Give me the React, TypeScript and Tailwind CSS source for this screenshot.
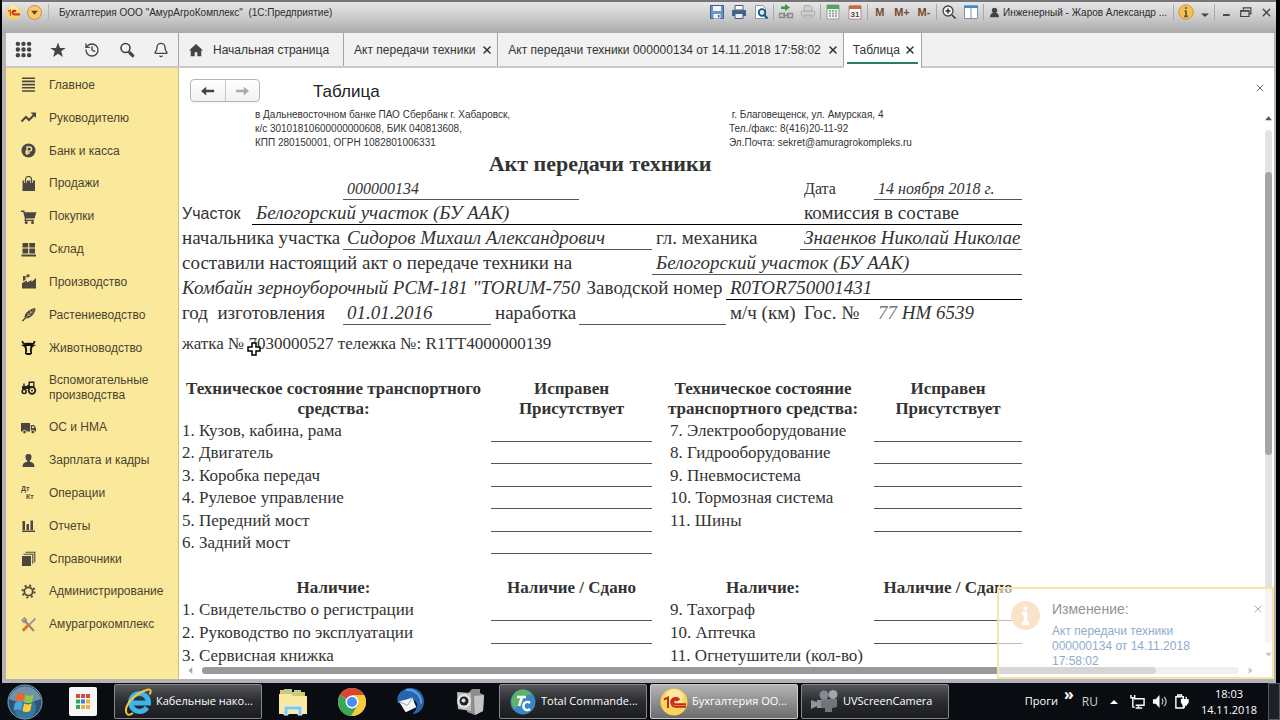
import type { ReactNode } from "react";
import { Bell, History, X } from "lucide-react";

const ink = "#4b4640";

const navItems: { label: string; icon: ReactNode }[] = [
  {
    label: "Главное",
    icon: <path d="M1 1.200h13M1 4.400h13M1 7.600h13M1 10.800h13M1 14h13" stroke={ink} strokeWidth="1.600" fill="none" />,
  },
  {
    label: "Руководителю",
    icon: (
      <g>
        <path d="M.5 11.500l4.500-4.500 3 3 5-5" stroke={ink} strokeWidth="2" fill="none" />
        <path d="M9.500 2.500H15V8z" fill={ink} />
      </g>
    ),
  },
  {
    label: "Банк и касса",
    icon: (
      <g>
        <circle cx="7.500" cy="7.500" r="7" fill={ink} />
        <path d="M6 12V4h2.500a2 2 0 0 1 0 4.200H4.300M4.300 10h4.500" stroke="#fbe99b" strokeWidth="1.300" fill="none" />
      </g>
    ),
  },
  {
    label: "Продажи",
    icon: (
      <g>
        <path d="M1.500 4.500h12.500V15H1.500z" fill={ink} />
        <path d="M4.500 7V3.500a3 3 0 0 1 6 0V7" stroke="#fbe99b" strokeWidth="2.600" fill="none" />
        <path d="M4.500 7V3.500a3 3 0 0 1 6 0V7" stroke={ink} strokeWidth="1.200" fill="none" />
      </g>
    ),
  },
  {
    label: "Покупки",
    icon: (
      <g fill={ink}>
        <path d="M0 1.500h3.200l.7 1.700H15.500L13.500 9.500H5.200l-.2 1.200h8v1.300H3.500l.4-2.500L2.200 3H0z" />
        <circle cx="5.200" cy="13.500" r="1.500" />
        <circle cx="11.500" cy="13.500" r="1.500" />
      </g>
    ),
  },
  {
    label: "Склад",
    icon: <path d="M1.500 1h5.700v4.500H1.500zM8.300 1H14v4.500H8.300zM1.500 6.500h5.700V11.500H1.500zM8.300 6.500H14v5H8.300zM.5 12.500H15V14.500H.5z" fill={ink} />,
  },
  {
    label: "Производство",
    icon: <path d="M1 14.500V9L6 6.500v2L10.500 6v2L15 4v10.500zM2 2h2.500v4L2 7zM5.500.5h3v2.500H7L5.500 4z" fill={ink} />,
  },
  {
    label: "Растениеводство",
    icon: (
      <g>
        <path d="M3.500 11C3 6.500 8 2 14.500 1 14.500 6 10 11.500 5 11.500L1.800 14.500.8 13.500z" fill={ink} />
        <path d="M4 11.500L13 2.500M7 6v2.500h3M9.500 3.500V6H12" stroke="#fbe99b" strokeWidth=".5" fill="none" />
      </g>
    ),
  },
  {
    label: "Животноводство",
    icon: (
      <g>
        <path d="M1.500 1c-.3 3 2 3 4 2.700h4c2 .3 4.300.3 4-2.700" stroke="#111" strokeWidth="1.700" fill="none" />
        <path d="M0 5l4.500-1h6L15 5l-3.500 2-.8 3.500.5 3-2 1.500H5.800l-2-1.500.5-3L3.500 7z" fill="#111" />
        <path d="M5.500 6h4l-.7 5 .7 2h-4l.7-2z" fill="#fbe99b" />
      </g>
    ),
  },
  {
    label: "Вспомогательные производства",
    icon: (
      <g>
        <path d="M1 6h5V5h1.500V1.500h6V9H1z" fill="#222" />
        <path d="M9 3h3.200v3H9z" fill="#fbe99b" />
        <path d="M3 3.500V6" stroke="#222" strokeWidth="1.400" />
        <circle cx="11" cy="10.500" r="3.300" fill="#fbe99b" stroke="#222" strokeWidth="1.800" />
        <circle cx="11" cy="10.500" r="1" fill="#222" />
        <circle cx="3.200" cy="11.500" r="2" fill="#fbe99b" stroke="#222" strokeWidth="1.600" />
      </g>
    ),
  },
  {
    label: "ОС и НМА",
    icon: (
      <g>
        <path d="M0 3h9v8.500H0zM9.800 5h3.200L15 8v3.500H9.800z" fill={ink} />
        <path d="M11 6.200h1.600l1 1.800H11z" fill="#fbe99b" />
        <circle cx="3.500" cy="12" r="1.800" fill={ink} stroke="#fbe99b" strokeWidth=".8" />
        <circle cx="11.800" cy="12" r="1.800" fill={ink} stroke="#fbe99b" strokeWidth=".8" />
      </g>
    ),
  },
  {
    label: "Зарплата и кадры",
    icon: <path d="M7.500 1a3 3 0 0 1 3 3.300c-.1 1.700-1 3.200-1.700 3.500v1c3 .5 4.500 1.500 4.700 5.200h-12c.2-3.700 1.700-4.700 4.700-5.200v-1C5.500 7.500 4.600 6 4.500 4.300A3 3 0 0 1 7.500 1z" fill={ink} />,
  },
  {
    label: "Операции",
    icon: (
      <g fill={ink} fontSize="7" fontWeight="700" fontFamily="Liberation Sans, sans-serif">
        <text x="0" y="6">Дт</text>
        <text x="5" y="14">Кт</text>
      </g>
    ),
  },
  {
    label: "Отчеты",
    icon: <path d="M1.500 3h2.500v9H1.500zM5.500 6H8v6H5.500zM9.500 2.500H12V12H9.500zM1 12.500h13V14H1z" fill={ink} />,
  },
  {
    label: "Справочники",
    icon: (
      <g>
        <path d="M1 5h9v10H1z" fill={ink} />
        <path d="M2.500 3.200h9.300v9.500M4.500 1.200h9.300v10" stroke={ink} strokeWidth="1.100" fill="none" />
      </g>
    ),
  },
  {
    label: "Администрирование",
    icon: (
      <g fill="none" stroke={ink}>
        <circle cx="7.500" cy="7.500" r="4.200" strokeWidth="1.800" />
        <circle cx="7.500" cy="7.500" r="6" strokeWidth="2" strokeDasharray="2 2.710" />
      </g>
    ),
  },
  {
    label: "Амурагрокомплекс",
    icon: (
      <g fill="none">
        <path d="M3 3l10 11" stroke="#8b8b86" strokeWidth="2" />
        <path d="M1 3.500L3.500 1l2 2L3 5.500z" stroke="#8b8b86" strokeWidth="1.300" />
        <path d="M14.500 1.500L8 8" stroke="#999" strokeWidth="1.800" />
        <path d="M8 7.500L1.800 13.800" stroke="#e2762a" strokeWidth="3" />
      </g>
    ),
  },
];

const tabs = ["Акт передачи техники", "Акт передачи техники 000000134 от 14.11.2018 17:58:02"];

const condition = [
  ["1. Кузов, кабина, рама", "7. Электрооборудование"],
  ["2. Двигатель", "8. Гидрооборудование"],
  ["3. Коробка передач", "9. Пневмосистема"],
  ["4. Рулевое управление", "10. Тормозная система"],
  ["5. Передний мост", "11. Шины"],
  ["6. Задний мост", ""],
];

const presence = [
  ["1. Свидетельство о регистрации", "9. Тахограф"],
  ["2. Руководство по эксплуатации", "10. Аптечка"],
  ["3. Сервисная книжка", "11. Огнетушители (кол-во)"],
];

const Sep = () => <span className="mx-px h-4 w-px shrink-0 bg-[#a9a9a9]" />;

const Tool = ({ label, children }: { label: string; children: ReactNode }) => (
  <button aria-label={label} className="flex h-5 w-[22px] shrink-0 items-center justify-center text-[11px] font-bold text-[#7a4a2c]">
    {children}
  </button>
);

const Svg = ({ children, size = 16 }: { children: ReactNode; size?: number }) => (
  <svg width={size} height={size} viewBox="0 0 16 16" className="shrink-0">
    {children}
  </svg>
);

const OneC = ({ size }: { size: number }) => (
  <svg width={size} height={size} viewBox="0 0 28 28" className="shrink-0">
    <circle cx="14" cy="14" r="13.500" fill="#fcd45c" />
    <circle cx="14" cy="10" r="9" fill="#fff3b8" opacity=".7" />
    <path d="M4 11.500l4-2V20M19.500 12a4.500 4.500 0 1 0-4 6.800H26M17.500 13.200a2.200 2.200 0 1 0-2 3H26" stroke="#c8281c" strokeWidth="2" fill="none" />
  </svg>
);

const TitleBar = () => (
  <header className="flex h-[33px] shrink-0 items-start border-t-2 border-[#77757a] bg-linear-to-b from-[#e6e6e6] via-[#cbcbcb] to-[#a9a9aa] pl-1 text-[10px] text-[#2b2b2b]">
    <div className="flex h-5 min-w-0 flex-1 items-center">
      <OneC size={15} />
      <button aria-label="Меню" className="ml-[6px] flex size-[15px] items-center justify-center rounded-full border border-[#c98f3a] bg-[#f8c873]">
        <Svg size={9}>
          <path d="M2 5h12l-6 7z" fill="#6b3d10" />
        </Svg>
      </button>
      <span className="ml-[6px] h-4 w-px bg-[#b5b5b5]" />
      <h1 className="ml-[10px] truncate whitespace-pre">Бухгалтерия ООО "АмурАгроКомплекс"  (1С:Предприятие)</h1>
    </div>
    <div className="flex h-5 items-center">
      <Tool label="Сохранить">
        <Svg>
          <path d="M1.500 1.500h13v13h-13z" fill="#6f93c4" stroke="#3d5f93" />
          <path d="M4 2h8v5H4zM4.500 10h7v4.500h-7z" fill="#eef3fa" />
          <path d="M9 11h1.500v2.500H9z" fill="#3d5f93" />
        </Svg>
      </Tool>
      <Tool label="Печать">
        <Svg>
          <path d="M4 1.500h8V6H4z" fill="#fff" stroke="#3f5c80" />
          <path d="M1 6h14v6H1z" fill="#456388" />
          <path d="M4 9.500h8v5H4z" fill="#e8eef5" stroke="#3f5c80" />
        </Svg>
      </Tool>
      <Tool label="Просмотр">
        <Svg>
          <path d="M2.500 1.500h7l3 3v10h-10z" fill="#fff" stroke="#8a99aa" />
          <circle cx="9" cy="8.500" r="3.300" fill="#cfe6f7" stroke="#14527a" strokeWidth="1.700" />
          <path d="M11 11l3.500 3.500" stroke="#14527a" strokeWidth="2" />
        </Svg>
      </Tool>
      <Sep />
      <Tool label="Ссылка">
        <Svg>
          <path d="M7 0l5 3.500L7 7V5H3V2.500h4z" fill="#3f9a44" />
          <path d="M1.500 9.500h5v4h-5zM9.500 9.500h5v4h-5zM5 11.500h6" fill="none" stroke="#888" strokeWidth="1.300" />
        </Svg>
      </Tool>
      <Tool label="Печать ссылки">
        <Svg>
          <path d="M4 1.500h6l2 2V7H4zM1.500 7h13v5h-13zM4 11h8v3H4z" fill="#cfcfcf" stroke="#b0b0b0" />
        </Svg>
      </Tool>
      <Sep />
      <Tool label="Калькулятор">
        <Svg>
          <path d="M2 1h12v14H2z" fill="#f4f6f4" stroke="#8fa394" />
          <path d="M2 1h12v4H2z" fill="#4da662" />
          <path d="M4 7h8M4 9.500h8M4 12h8" stroke="#8a948c" strokeWidth="1.500" strokeDasharray="2 1" />
        </Svg>
      </Tool>
      <Tool label="Календарь">
        <Svg>
          <path d="M2 2h12v13H2z" fill="#fff" stroke="#a88" />
          <path d="M2 1.500h12V5H2z" fill="#c5703c" />
          <text x="3.500" y="13" fontSize="8" fill="#444">31</text>
        </Svg>
      </Tool>
      <Sep />
      <Tool label="M">M</Tool>
      <Tool label="M+">M+</Tool>
      <Tool label="M-">M-</Tool>
      <Sep />
      <Tool label="Масштаб">
        <Svg>
          <circle cx="7" cy="7" r="5" fill="#f4f4f4" stroke="#444" strokeWidth="1.300" />
          <path d="M4.500 7h5M7 4.500v5M11 11l3.500 3.500" stroke="#333" strokeWidth="1.500" />
        </Svg>
      </Tool>
      <Tool label="Окна">
        <Svg>
          <path d="M1.500 2h13v12.500h-13zM8 4v10" fill="#fff" stroke="#7d93a8" />
          <path d="M1 1.500h14V4H1z" fill="#3a8dcb" />
        </Svg>
      </Tool>
      <Sep />
      <button className="flex h-5 items-center gap-[3px] pr-[5px] pl-1">
        <Svg size={11}>
          <path d="M8 1a4 4 0 0 1 2 7.500c3 .8 4.500 2.500 4.500 6.500h-13C1.500 11 3 9.300 6 8.500A4 4 0 0 1 8 1z" fill="#444" />
        </Svg>
        Инженерный - Жаров Александр ...
      </button>
      <Sep />
      <Tool label="Информация">
        <Svg>
          <circle cx="8" cy="8" r="7.300" fill="#f6bf55" stroke="#d49a35" />
          <path d="M8 3v2M6.500 7H8v5M6 12.300h4" stroke="#6d5a3a" strokeWidth="1.700" fill="none" />
        </Svg>
      </Tool>
      <button aria-label="Ещё" className="flex h-5 w-4 items-end justify-center pb-[3px]">
        <Svg size={8}>
          <path d="M0 5h16l-8 7z" fill="#444" />
        </Svg>
      </button>
      <Sep />
      <button aria-label="Свернуть" className="flex h-5 w-5 items-center justify-center">
        <Svg size={12}>
          <path d="M4 12h9" stroke="#444" strokeWidth="2.500" />
        </Svg>
      </button>
      <button aria-label="Развернуть" className="flex h-5 w-5 items-center justify-center">
        <Svg size={12}>
          <path d="M4.500 5V2.500h10v8H12M1 6h11v8H1zM1 7h11" fill="none" stroke="#444" strokeWidth="1.600" />
        </Svg>
      </button>
      <button aria-label="Закрыть" className="flex h-5 w-5 items-center justify-center">
        <X size={13} strokeWidth={2.5} color="#444" />
      </button>
    </div>
  </header>
);

const TabBar = () => (
  <div className="flex h-[35px] shrink-0 border-b-2 border-[#c9c9c9] bg-[#f1f1f1] text-xs text-[#333]">
    <div className="flex w-[173px] shrink-0 items-center justify-around border-r border-[#a5a5a5] text-[#444]">
      <button aria-label="Разделы">
        <Svg size={17}>
          <path d="M2.700 2.700h.01M8 2.700h.01M13.300 2.700h.01M2.700 8h.01M8 8h.01M13.300 8h.01M2.700 13.300h.01M8 13.300h.01M13.300 13.300h.01" stroke="#444" strokeWidth="4.200" strokeLinecap="round" />
        </Svg>
      </button>
      <button aria-label="Избранное">
        <Svg>
          <path d="M8 .5l2 5.500h5.700L11.200 9.300l1.700 5.700L8 11.700 3.100 15l1.700-5.700L.3 6H6z" fill="#444" />
        </Svg>
      </button>
      <button aria-label="История"><History size={16} strokeWidth={2} /></button>
      <button aria-label="Поиск">
        <Svg>
          <circle cx="6.500" cy="6" r="4.500" fill="none" stroke="#444" strokeWidth="1.600" />
          <path d="M9.500 9.500l1.500 1.500" stroke="#444" strokeWidth="1.500" />
          <path d="M11 11l2.700 2.700" stroke="#444" strokeWidth="3.200" strokeLinecap="round" />
        </Svg>
      </button>
      <button aria-label="Оповещения"><Bell size={16} strokeWidth={2} /></button>
    </div>
    <a href="#home" className="flex items-center gap-[10px] border-r border-[#a5a5a5] pr-[14px] pl-[10px]">
      <Svg size={14}>
        <path d="M8 1L0 8.500h2V15h4.500v-4.500h3V15H14V8.500h2z" fill="#444" />
      </Svg>
      Начальная страница
    </a>
    {tabs.map((tab) => (
      <div key={tab} className="flex items-center gap-[6px] border-r border-[#a5a5a5] pr-1 pl-[10px]">
        <a href="#tab">{tab}</a>
        <button aria-label="Закрыть вкладку"><X size={12} strokeWidth={3} /></button>
      </div>
    ))}
    <div className="h-[35px] border-r border-[#a5a5a5] bg-white px-[3px]">
      <div className="flex h-[31px] items-center gap-1 border-b-2 border-[#25805f] pt-1 pr-[2px] pl-[6px]">
        <a href="#table">Таблица</a>
        <button aria-label="Закрыть вкладку"><X size={12} strokeWidth={3} /></button>
      </div>
    </div>
  </div>
);

const Sidebar = () => (
  <nav className="flex w-[173px] shrink-0 flex-col border-r border-[#cdbf80] bg-[#fbe99b] pt-px pb-[38px] text-xs leading-[15px] text-[#4a4330]">
    {navItems.map((item) => (
      <a key={item.label} href="#section" className="flex grow items-center gap-3 pr-2 pl-[15px]">
        <Svg size={16}>{item.icon}</Svg>
        <span>{item.label}</span>
      </a>
    ))}
  </nav>
);

const line = "border-b border-[#555]";

const CheckTable = ({ heads, rows, className }: { heads: ReactNode[]; rows: string[][]; className: string }) => (
  <table className={`w-[840px] table-fixed border-separate border-spacing-0 ${className}`}>
    <colgroup>
      <col className="w-[309px]" />
      <col className="w-[161px]" />
      <col className="w-[222px]" />
      <col className="w-[148px]" />
    </colgroup>
    <thead>
      <tr className="text-[17px] leading-5">
        {heads.map((head, i) => (
          <th key={i} className="p-0 text-center font-bold first:pr-[6px]">{head}</th>
        ))}
      </tr>
    </thead>
    <tbody className="text-[17px] leading-[21px]">
      {rows.map(([left, right]) => (
        <tr key={left}>
          <td className="p-0">{left}</td>
          <td className={line} />
          <td className="py-0 pr-0 pl-[18px] whitespace-nowrap">{right}</td>
          <td className={right ? line : ""} />
        </tr>
      ))}
    </tbody>
  </table>
);

const Sheet = () => (
  <article className="w-[840px] font-['Liberation_Serif',serif] text-[#333]">
    <div className="flex pl-[73px] font-['Liberation_Sans',sans-serif] text-[10px] leading-[14px]">
      <p className="w-[474px]">
        в Дальневосточном банке ПАО Сбербанк г. Хабаровск,
        <br />
        к/с 30101810600000000608, БИК 040813608,
        <br />
        КПП 280150001, ОГРН 1082801006331
      </p>
      <p>
        &nbsp;г. Благовещенск, ул. Амурская, 4
        <br />
        Тел./факс: 8(416)20-11-92
        <br />
        Эл.Почта: sekret@amuragrokompleks.ru
      </p>
    </div>
    <h3 className="pr-1 text-center text-[22px] leading-7 font-bold">Акт передачи техники</h3>

    <div className="grid auto-rows-[25px] grid-cols-[70px_91px_148px_88px_73px_74px_74px_74px_148px] grid-rows-[22px] text-[19px] leading-[25px] whitespace-nowrap *:pl-1">
      <span className={`col-span-2 col-start-3 text-base leading-[22px] italic ${line}`}>000000134</span>
      <span className="col-start-8 text-base leading-[22px]">Дата</span>
      <span className={`text-base leading-[22px] italic ${line}`}>14 ноября 2018 г.</span>

      <span className="-ml-1 self-end font-['Liberation_Sans',sans-serif] text-base leading-[22px]">Участок</span>
      <span className="col-span-6 border-b border-black italic">Белогорский участок (БУ ААК)</span>
      <span className="col-span-2 border-b border-black">комиссия в составе</span>

      <span className="col-span-2 -ml-1">начальника участка</span>
      <span className={`col-span-3 italic ${line}`}>Сидоров Михаил Александрович</span>
      <span className="col-span-2">гл. механика</span>
      <span className={`col-span-2 italic ${line}`}>Знаенков Николай Николае</span>

      <span className="col-span-5 -ml-1">составили настоящий акт о передаче техники на</span>
      <span className={`col-span-4 italic ${line}`}>Белогорский участок (БУ ААК)</span>

      <span className="col-span-4 -ml-1 italic">Комбайн зерноуборочный РСМ-181 "TORUM-750</span>
      <span className="col-span-2 text-center">Заводской номер</span>
      <span className="col-span-3 border-b border-black italic">R0TOR750001431</span>

      <span className="col-span-2 -ml-1 whitespace-pre">год  изготовления</span>
      <span className={`italic ${line}`}>01.01.2016</span>
      <span>наработка</span>
      <span className={`col-span-2 ${line}`} />
      <span>м/ч (км)</span>
      <span>Гос. №</span>
      <span className="italic">
        <span className="text-[#777]">77</span> НМ 6539
      </span>
    </div>

    <div className="relative mt-px text-[17px] leading-9">
      жатка № 7030000527 тележка №: R1TT4000000139
      {/* spreadsheet cross cursor */}
      <svg width="14" height="14" viewBox="0 0 14 14" className="absolute top-4 left-[65px]">
        <path d="M5 1h4v4h4v4H9v4H5V9H1V5h4z" fill="#fff" stroke="#000" strokeWidth="1.500" />
      </svg>
    </div>

    <CheckTable
      className="mt-[17px] h-[175px]"
      heads={[
        "Техническое состояние транспортного средства:",
        <>Исправен<br />Присутствует</>,
        "Техническое состояние транспортного средства:",
        <>Исправен<br />Присутствует</>,
      ]}
      rows={condition}
    />
    <CheckTable
      className="mt-6 h-[89px]"
      heads={["Наличие:", "Наличие / Сдано", "Наличие:", "Наличие / Сдано"]}
      rows={presence}
    />
  </article>
);

const Toast = () => (
  <aside className="absolute right-0 bottom-0 flex h-[92px] w-[277px] gap-3 border-2 border-[#f3e7a6] bg-white/60 pt-3 pl-3">
    <svg width="29" height="29" viewBox="0 0 28 28" className="shrink-0">
      <circle cx="14" cy="14" r="14" fill="#fbe3cb" />
      <path d="M14 5v4M11 12h3v9M10.500 21.500h7" stroke="#fff" strokeWidth="3.500" fill="none" />
    </svg>
    <div className="text-xs leading-[15px] text-[#8fabcb]">
      <p className="mb-[6px] text-sm leading-[17px] text-[#96938e]">Изменение:</p>
      <a href="#act" className="block w-[150px]">Акт передачи техники 000000134 от 14.11.2018 17:58:02</a>
    </div>
    <button aria-label="Закрыть сообщение" className="absolute top-[14px] right-2">
      <X size={12} strokeWidth={2} color="#aaa" />
    </button>
  </aside>
);

const Document = () => (
  <main className="relative flex min-w-0 flex-1 flex-col bg-white">
    <div className="flex h-10 shrink-0 items-end pl-[11px]">
      <div className="mb-[6px] flex h-[23px] w-[70px] divide-x divide-[#c5c5c5] rounded-sm border border-[#b5b5b5] bg-linear-to-b from-white to-[#f1f1f1] shadow-xs">
        <button aria-label="Назад" className="flex flex-1 items-center justify-center">
          <Svg size={14}>
            <path d="M0 8l6-5v3.700h9v2.600H6V13z" fill="#444" />
          </Svg>
        </button>
        <button aria-label="Вперёд" className="flex flex-1 items-center justify-center">
          <Svg size={14}>
            <path d="M16 8l-6-5v3.700H1v2.600h9V13z" fill="#aaa" />
          </Svg>
        </button>
      </div>
      <h2 className="mb-1 ml-[53px] text-[17px] leading-6 text-[#222]">Таблица</h2>
      <button aria-label="Закрыть" className="mr-2 mb-[14px] ml-auto">
        <X size={12} strokeWidth={2} color="#666" />
      </button>
    </div>
    <div className="flex min-h-0 flex-1">
      <div className="min-w-0 flex-1 overflow-hidden pl-[3px]">
        <Sheet />
      </div>
      <div className="flex w-3 shrink-0 flex-col items-center gap-2 pt-[7px] pb-[7px]">
        <Svg size={7}><path d="M0 12h16L8 3z" fill="#555" /></Svg>
        <div className="w-[7px] flex-1 rounded-full bg-[#e3e3e6] pt-[42px]">
          <div className="h-[60%] rounded-full bg-[#a5a5a8]" />
        </div>
        <Svg size={7}><path d="M0 4h16l-8 9z" fill="#777" /></Svg>
      </div>
    </div>
    <div className="flex h-[14px] shrink-0 items-start gap-2 pt-[2px] pr-5 pl-2">
      <Svg size={7}><path d="M12 0v16L3 8z" fill="#aaa" /></Svg>
      <div className="h-[7px] flex-1 rounded-full bg-[#d9d9dc]">
        <div className="h-full w-[92%] rounded-full bg-[#999]" />
      </div>
      <Svg size={7}><path d="M4 0v16l9-8z" fill="#777" /></Svg>
    </div>
    <Toast />
  </main>
);

const TaskButton = ({ icon, label, active }: { icon: ReactNode; label: string; active?: boolean }) => (
  <button
    className={`flex h-[35px] w-[148px] items-center gap-1 rounded-xs border pl-[9px] ${
      active
        ? "border-[#c9c9c9] bg-linear-to-b from-[#b5b5b5] to-[#6c6c6c]"
        : "border-[#85878a] bg-linear-to-b from-[#55575a] via-[#2a2c2f] to-[#1a1c1f]"
    }`}
  >
    {icon}
    <span className="truncate">{label}</span>
  </button>
);

const Taskbar = () => (
  <footer className="flex h-[37px] shrink-0 items-center bg-[#090c11] pl-[7px] font-['Open_Sans',sans-serif] text-[11px] text-white">
    <button aria-label="Пуск">
      <svg width="36" height="36" viewBox="0 0 36 36">
        <circle cx="18" cy="18" r="17" fill="#2c5577" stroke="#7fa3bd" />
        <circle cx="18" cy="24" r="11" fill="#3f9cc4" opacity=".5" />
        <path d="M2 15a16.500 16.500 0 0 1 32 0c-8 4-24 4-32 0z" fill="#a9c3d6" opacity=".55" />
        <path d="M10 10c3-1.500 5-1.200 7.500 0L16 17.500c-2.500-1.200-5-1.300-7.700 0z" fill="#f0622c" />
        <path d="M18.700 10.700c3 1.300 5 1.300 7.800 0L25 18.200c-2.500 1.200-5 1.200-7.800 0z" fill="#93c83d" />
        <path d="M8 18.700c3-1.300 5-1.300 7.700 0l-1.500 7.500c-2.500-1.200-5-1.200-7.700 0z" fill="#4aa5e0" />
        <path d="M17 19.500c3 1.200 5 1.200 7.700 0L23.200 27c-2.500 1.200-5 1.200-7.700 0z" fill="#fccb3b" />
      </svg>
    </button>
    <button aria-label="Приложения" className="ml-[26px]">
      <svg width="28" height="29" viewBox="0 0 28 29">
        <rect width="28" height="29" rx="2" fill="#f7f7f7" />
        <path d="M7 7h4v4H7zM12 7h4v4h-4zM17 7h4v4h-4z" fill="#d8483c" />
        <path d="M7 12.500h4v4H7z" fill="#3aa65a" />
        <path d="M12 12.500h4v4h-4z" fill="#3b7ddd" />
        <path d="M17 12.500h4v4h-4zM12 18h4v4h-4zM17 18h4v4h-4z" fill="#e9b233" />
        <path d="M7 18h4v4H7z" fill="#3aa65a" />
      </svg>
    </button>
    <div className="ml-[17px]">
      <TaskButton
        label="Кабельные нако..."
        icon={
          <svg width="28" height="30" viewBox="0 0 28 30" className="shrink-0">
            <path d="M23 20.500a9 9 0 1 1 1.500-4.500H9" fill="none" stroke="#3db4ea" strokeWidth="5" />
            <path d="M3 27C-1 21 8 7 24 2.500c3.500-.5 3 3 1.500 5" fill="none" stroke="#f3c83b" strokeWidth="2" />
            <path d="M3 27c1.500 1.500 4 .5 6-1" fill="none" stroke="#f3c83b" strokeWidth="2" />
          </svg>
        }
      />
    </div>
    <div className="ml-4 flex items-center gap-[30px]">
      <button aria-label="Проводник">
        <svg width="30" height="30" viewBox="0 0 30 30">
          <path d="M2 3h9l2 2h14v22H2z" fill="#e3c164" />
          <path d="M6 2h8v5H6zM16 3h7v5h-7z" fill="#b9ce8e" />
          <path d="M1 7h12l2 2h14v18H1z" fill="#fae9a0" />
          <path d="M6 28v-9h18v9h-4v-5H10v5z" fill="#86c7e8" stroke="#dff1fa" />
        </svg>
      </button>
      <button aria-label="Chrome">
        <svg width="28" height="28" viewBox="0 0 28 28">
          <circle cx="14" cy="14" r="14" fill="#f7cc3c" />
          <path d="M14 14L1.900 7A14 14 0 0 1 26.100 7z" fill="#dc4436" />
          <path d="M1.900 7A14 14 0 0 0 13 28l6.500-10.500-5.500-3z" fill="#3aa757" />
          <path d="M14 7h12.100a14 14 0 0 1-12.100 21l6-10.500z" fill="#f7cc3c" />
          <circle cx="14" cy="14" r="6.500" fill="#fff" />
          <circle cx="14" cy="14" r="5" fill="#4c8bf5" />
        </svg>
      </button>
      <button aria-label="Thunderbird">
        <svg width="29" height="29" viewBox="0 0 30 30">
          <path d="M15 1c8 0 14 6 14 14 0 7-5 13-12 13 4-4 6-8 4-12-3-5-12-4-19 1C-1 8 7 1 15 1z" fill="#2766ae" />
          <path d="M10 3c9-1 16 5 16 14" fill="none" stroke="#5ba6df" strokeWidth="2" />
          <path d="M3 15l14-4 4 10-11 5z" fill="#f1f3f5" />
          <path d="M3 15l9 4 5-8" fill="none" stroke="#9aa6b3" />
        </svg>
      </button>
      <button aria-label="Камера">
        <svg width="30" height="30" viewBox="0 0 30 30">
          <path d="M14 5l3-3h8v4l4 2-1 16-8 4-8-3z" fill="#8d8d8d" />
          <path d="M19 9l10-1-1 16-8 4z" fill="#c4c4c4" />
          <path d="M2 5l14 1v18L3 22z" fill="#bdbdbd" />
          <circle cx="9" cy="14" r="7" fill="#e5e5e5" />
          <circle cx="9" cy="14" r="4.500" fill="#222" />
          <circle cx="8.500" cy="13.500" r="2" fill="#ddd" />
        </svg>
      </button>
    </div>
    <div className="ml-[14px] flex gap-[3px]">
      <TaskButton
        label="Total Commande..."
        icon={
          <svg width="28" height="28" viewBox="0 0 26 28" className="shrink-0">
            <circle cx="13" cy="14" r="12.500" fill="#3d86c6" />
            <path d="M4 6c5-6 14-6 18 1-6-1-8 2-9 6s-6 4-8 8c-5-4-4-11-1-15z" fill="#5bb46a" />
            <path d="M7 9h9M12 9l-3 9M20 15a4 4 0 1 0 0 6" stroke="#fff" strokeWidth="2.500" fill="none" />
          </svg>
        }
      />
      <TaskButton active label="Бухгалтерия ОО..." icon={<OneC size={28} />} />
      <TaskButton
        label="UVScreenCamera"
        icon={
          <svg width="28" height="26" viewBox="0 0 28 26" className="shrink-0">
            <path d="M0 11l6 2v-2h5v8H6v-2l-6 3z" fill="#8e9499" />
            <path d="M10 10h16v8l-5 1v4h-7v-4h-4z" fill="#6f757a" />
            <circle cx="13" cy="6" r="4.500" fill="#858b90" />
            <circle cx="22" cy="5.500" r="4.500" fill="#a1a7ab" />
          </svg>
        }
      />
    </div>
    <div className="ml-auto flex h-full items-center">
      <span>Проги</span>
      <button aria-label="Развернуть панель" className="mb-4 ml-[6px] text-base leading-4 font-bold">»</button>
      <span className="mr-3 ml-2 text-xs text-[#d0d0d0]">RU</span>
      <Svg size={8}><path d="M0 12h16L8 4z" fill="#fff" /></Svg>
      <div className="ml-3 flex items-center gap-[7px]">
        <Svg size={15}>
          <path d="M4 5h11v7H6M9 12v3M6 15h7" fill="none" stroke="#fff" strokeWidth="1.500" />
          <path d="M1 1v3h4V1M3 4v10h2" fill="none" stroke="#fff" strokeWidth="1.500" />
        </Svg>
        <Svg size={15}>
          <path d="M1 5.500h3L8 1v14l-4-4.500H1z" fill="#fff" />
          <path d="M10.500 5c1.500 2 1.500 4 0 6M13 3c2.500 3 2.500 7 0 10" fill="none" stroke="#ccc" strokeWidth="1.200" />
        </Svg>
        <Svg size={15}>
          <path d="M2 3h8v12H2zM4 1h4v2H4z" fill="none" stroke="#fff" strokeWidth="1.500" />
          <path d="M8 6h7v3l-2 3h-3L8 9zM10 3v3M13 3v3M11 12v3" fill="#fff" stroke="#fff" strokeWidth="1.300" />
        </Svg>
      </div>
      <time className="mr-[11px] ml-3 text-center leading-4">
        18:03
        <br />
        14.11.2018
      </time>
      <button aria-label="Показать рабочий стол" className="h-full w-3 border border-[#55585c] bg-[#1d2024]" />
    </div>
  </footer>
);

export default function App() {
  return (
    <div className="flex h-screen flex-col bg-black font-['Liberation_Sans',sans-serif]">
      <div className="mr-1 ml-[2px] flex min-h-0 flex-1 flex-col">
        <TitleBar />
        <div className="flex min-h-0 flex-1 flex-col border-x-4 border-r-2 border-b-4 border-[#b4b2b6]">
          <TabBar />
          <div className="flex min-h-0 flex-1">
            <Sidebar />
            <Document />
          </div>
        </div>
      </div>
      <Taskbar />
    </div>
  );
}
